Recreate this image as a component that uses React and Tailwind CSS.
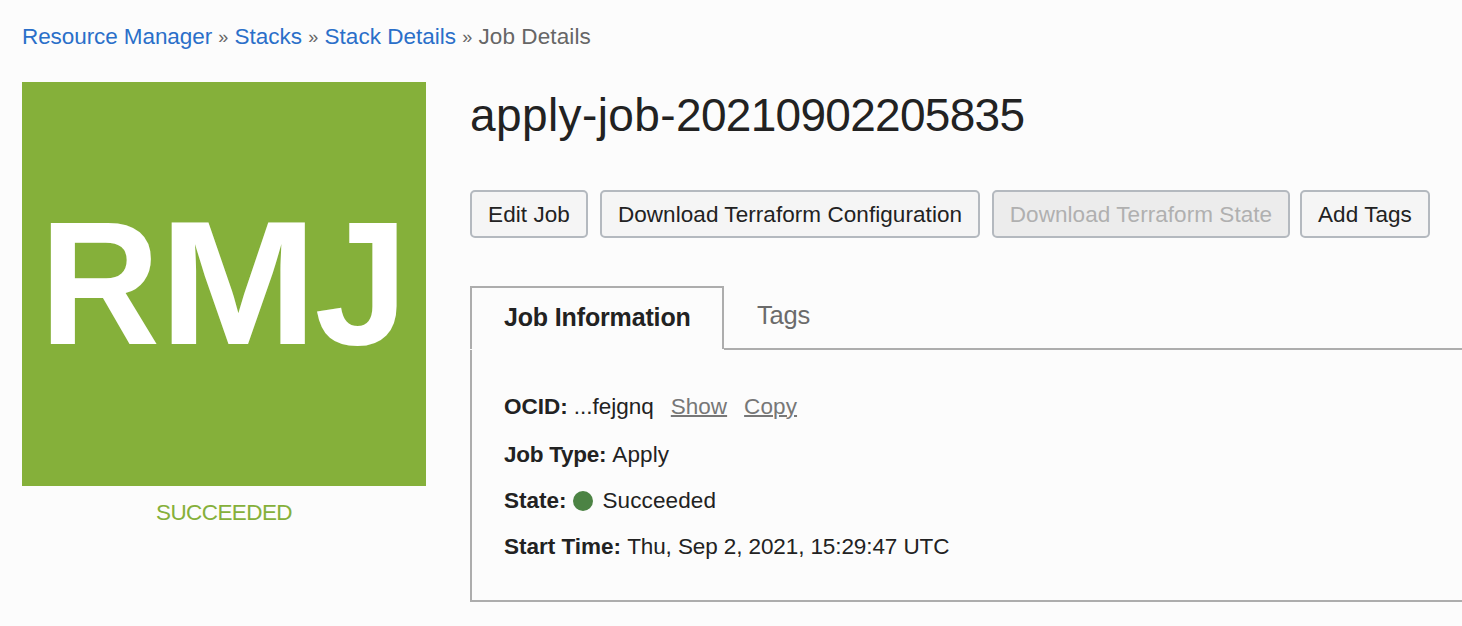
const crumbs = ["Resource Manager", "Stacks", "Stack Details"];

function Button({ children, className = "", disabled = false }) {
  const tone = disabled ? "bg-[#ececec] text-[#b0b0b0]" : "bg-[#f5f5f5] text-[#222222]";
  return (
    <button
      disabled={disabled}
      className={`h-12 shrink-0 rounded-[5px] border-2 border-[#b4b9bf] pt-[2px] text-[22.5px] leading-[42px] tracking-[0.06px] whitespace-nowrap ${tone} ${className}`}
    >
      {children}
    </button>
  );
}

export default function App() {
  return (
    <div className="h-[626px] w-[1462px] overflow-hidden bg-[#fcfcfc] font-['Liberation_Sans',Arial,sans-serif] text-[22.5px] text-[#222222]">
      <nav className="flex h-[82px] items-start pt-[22px] pl-[22px] leading-[30px] whitespace-nowrap text-[#666666]">
        {crumbs.map((label) => (
          <span key={label} className="flex first:tracking-[-0.08px]">
            <a href="#" className="text-[#2a6fc9]">{label}</a>
            <span className="w-[22.5px] text-center text-[18px]">»</span>
          </span>
        ))}
        <span className="tracking-[0.1px]">Job Details</span>
      </nav>
      <div className="flex pl-[22px]">
        <aside className="w-[404px] shrink-0">
          <div className="flex h-[404px] items-center justify-center bg-[#85b03a] pb-[1px] text-[177px] leading-none font-bold text-white">
            <span className="-translate-x-[1px] scale-x-[0.94]">R</span>
            <span className="-translate-x-[0.5px] scale-x-[1.075]">M</span>
            <span className="scale-x-[0.95]">J</span>
          </div>
          <div className="mt-3 text-center leading-[30px] tracking-[-0.6px] text-[#85b03a]">SUCCEEDED</div>
        </aside>
        <main className="ml-[44px] flex-1">
          <h1 className="h-[108px] pt-[6px] text-[46px] leading-[54px] whitespace-nowrap">
            <span className="tracking-[0.4px]">apply-job-</span>
            <span className="tracking-[-0.7px]">20210902205835</span>
          </h1>
          <div className="flex">
            <Button className="w-[118px]">Edit Job</Button>
            <Button className="ml-3 w-[380px]">Download Terraform Configuration</Button>
            <Button className="ml-3 w-[298px]" disabled>Download Terraform State</Button>
            <Button className="ml-[10px] w-[130px]">Add Tags</Button>
          </div>
          <div className="mt-12 flex h-16">
            <div className="h-[63px] w-[254px] border-2 border-b-0 border-[#adadad] pl-8 text-[25px] leading-[58px] font-bold tracking-[-0.15px] whitespace-nowrap">
              Job Information
            </div>
            <div className="flex-1 border-b-2 border-[#adadad] pl-[33px] text-[25.5px] leading-[58px] tracking-[-0.2px] text-[#6b6b6b]">Tags</div>
          </div>
          <section className="h-[252px] border-b-2 border-l-2 border-[#adadad] pt-[42px] pl-8 leading-[30px] whitespace-nowrap">
            <div className="flex h-12">
              <b>OCID:</b>
              <span className="ml-[6px]">...fejgnq</span>
              <a href="#" className="ml-[17px] text-[#777777] underline decoration-2">Show</a>
              <a href="#" className="ml-[17px] tracking-[0.1px] text-[#777777] underline decoration-2">Copy</a>
            </div>
            <div className="flex h-[46px]">
              <b className="tracking-[-0.25px]">Job Type:</b>
              <span className="ml-[6px] tracking-[0.1px]">Apply</span>
            </div>
            <div className="flex h-[46px]">
              <b>State:</b>
              <i className="mt-[5px] ml-[6px] size-5 rounded-full bg-[#4c8344]" />
              <span className="ml-[10px] tracking-[0.1px]">Succeeded</span>
            </div>
            <div className="flex">
              <b>Start Time:</b>
              <span className="ml-[6px] tracking-[-0.1px]">Thu, Sep 2, 2021, 15:29:47 UTC</span>
            </div>
          </section>
        </main>
      </div>
    </div>
  );
}
